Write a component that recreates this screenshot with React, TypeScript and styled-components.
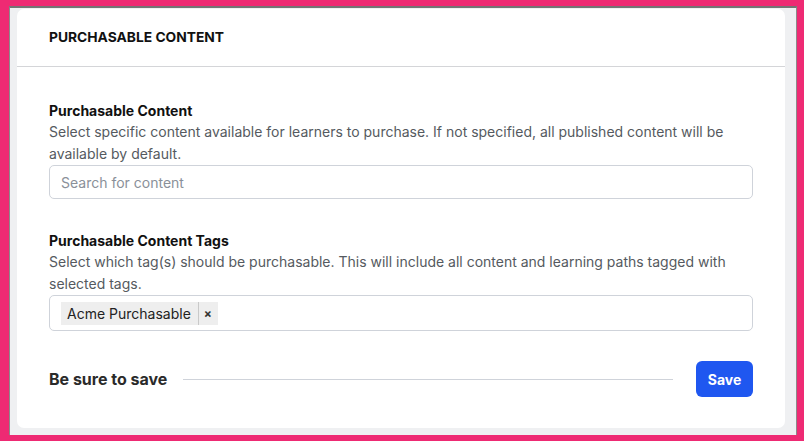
import React from "react";
import styled, { createGlobalStyle } from "styled-components";

const Global = createGlobalStyle`
  html, body { margin: 0; padding: 0; }
  body {
    width: 804px;
    height: 441px;
    overflow: hidden;
    font-family: Inter, "Liberation Sans", Arial, sans-serif;
    background: #ee2a73;
  }
  #root { height: 100%; }
`;

const Frame = styled.div`
  box-sizing: border-box;
  margin: 6px 7px 6px 9px;
  height: 429px;
  background: #eff0f2;
  border-top: 2px solid #747474;
  border-left: 1px solid #8a8a8a;
  border-right: 1px solid #8a8a8a;
  padding: 1px 11px 0 7px;
`;

const Card = styled.div`
  background: #ffffff;
  border-radius: 7px;
  height: 419px;
  box-sizing: border-box;
  display: flex;
  flex-direction: column;
`;

const Header = styled.div`
  height: 58px;
  box-sizing: border-box;
  padding: 0 32px 1px 32px;
  display: flex;
  align-items: center;
  border-bottom: 1px solid #d4d5d8;
  font-size: 13.8px;
  font-weight: 700;
  color: #111;
  text-transform: uppercase;
`;

const Body = styled.div`
  padding: 34px 32px 0 32px;
  display: flex;
  flex-direction: column;
`;

const Section = styled.div`
  display: flex;
  flex-direction: column;
  margin-bottom: 32px;
`;

const Label = styled.div`
  font-size: 14px;
  font-weight: 700;
  line-height: 20px;
  color: #111;
`;

const Description = styled.div`
  font-size: 14px;
  line-height: 22px;
  color: #555a60;
`;

const Field = styled.div<{ $h: number }>`
  box-sizing: border-box;
  height: ${(p) => p.$h}px;
  border: 1px solid #cfd3da;
  border-radius: 5px;
  display: flex;
  align-items: center;
  padding: 0 11px;
  font-size: 14px;
`;

const Placeholder = styled.span`
  color: #8a9099;
`;

const Chip = styled.div`
  display: flex;
  align-items: stretch;
  height: 23px;
  background: #eeeeee;
  color: #222;
  font-size: 14px;
`;

const ChipText = styled.span`
  display: flex;
  align-items: center;
  padding: 0 7px 0 6px;
  border-right: 1px solid #c9c9c9;
`;

const ChipX = styled.span`
  display: flex;
  align-items: center;
  padding: 0 6px 0 5px;
  font-size: 12px;
  font-weight: 700;
  color: #333;
`;

const Footer = styled.div`
  display: flex;
  align-items: center;
  height: 36px;
  margin-top: -2px;
`;

const FooterTitle = styled.div`
  font-size: 16px;
  font-weight: 700;
  color: #2a2a2a;
  white-space: nowrap;
`;

const Rule = styled.div`
  flex: 1;
  height: 1px;
  background: #cfd3da;
  margin: 0 23px 0 16px;
`;

const SaveButton = styled.button`
  height: 36px;
  width: 57px;
  border: none;
  border-radius: 6px;
  background: #1f57f0;
  color: #fff;
  font-family: inherit;
  font-size: 14px;
  font-weight: 700;
  cursor: pointer;
`;

export default function App() {
  return (
    <>
      <Global />
      <Frame>
        <Card>
          <Header>Purchasable Content</Header>
          <Body>
            <Section>
              <Label>Purchasable Content</Label>
              <Description>
                Select specific content available for learners to purchase. If not specified, all published content will be available by default.
              </Description>
              <Field $h={34}>
                <Placeholder>Search for content</Placeholder>
              </Field>
            </Section>
            <Section>
              <Label>Purchasable Content Tags</Label>
              <Description>
                Select which tag(s) should be purchasable. This will include all content and learning paths tagged with selected tags.
              </Description>
              <Field $h={36}>
                <Chip>
                  <ChipText>Acme Purchasable</ChipText>
                  <ChipX>×</ChipX>
                </Chip>
              </Field>
            </Section>
            <Footer>
              <FooterTitle>Be sure to save</FooterTitle>
              <Rule />
              <SaveButton>Save</SaveButton>
            </Footer>
          </Body>
        </Card>
      </Frame>
    </>
  );
}
